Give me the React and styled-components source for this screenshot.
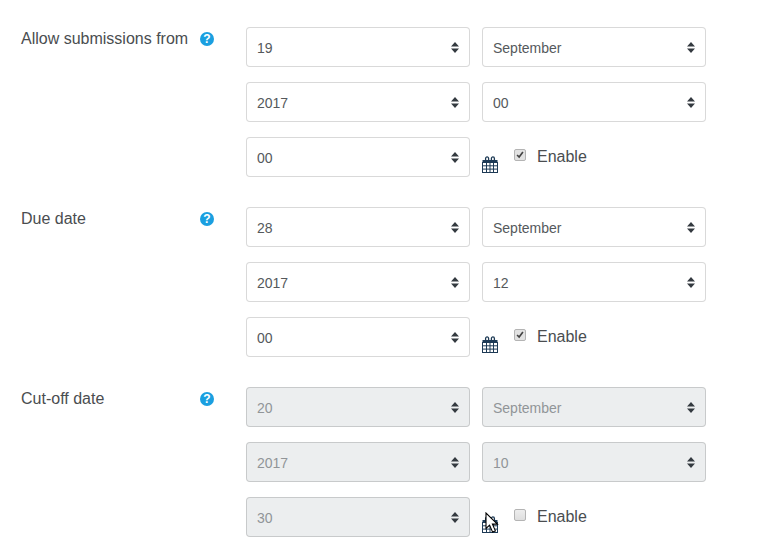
import React from "react";
import styled, { createGlobalStyle } from "styled-components";

const Global = createGlobalStyle`
  html, body { margin: 0; padding: 0; background: #fff; overflow: hidden; }
  body { font-family: "Liberation Sans", Arial, sans-serif; color: #4a4d50; }
`;

const Page = styled.div`
  width: 780px;
  height: 556px;
  padding: 27px 0 0 21px;
  box-sizing: border-box;
  overflow: hidden;
  position: relative;
`;

const Section = styled.section`
  display: grid;
  grid-template-columns: 179px 46px 460px;
  margin-bottom: 30px;
`;

const Label = styled.div`
  font-size: 16px;
  line-height: 23px;
  color: #4a4d50;
`;

const HelpWrap = styled.div`
  padding-top: 5px;
`;

const Fields = styled.div`
  display: grid;
  grid-template-columns: 224px 224px;
  column-gap: 12px;
  row-gap: 15px;
`;

const SelectWrap = styled.div`
  position: relative;
  height: 40px;
`;

const Select = styled.select`
  appearance: none;
  width: 100%;
  height: 40px;
  box-sizing: border-box;
  padding: 2px 24px 0 10px;
  border: 1px solid rgba(0, 0, 0, 0.15);
  border-radius: 4px;
  font-family: "Liberation Sans", Arial, sans-serif;
  font-size: 14px;
  color: ${(p) => (p.disabled ? "#919598" : "#55595c")};
  background: ${(p) => (p.disabled ? "#eceeef" : "#fff")};
  opacity: 1;
`;

const ArrowIcon = styled.svg`
  position: absolute;
  right: 11px;
  top: 15px;
  pointer-events: none;
`;

const EnableCell = styled.div`
  display: flex;
  align-items: flex-start;
  height: 40px;
`;

const CalendarLink = styled.span`
  display: block;
  width: 16px;
  height: 17px;
  margin-top: 19px;
  line-height: 0;
`;

const CheckLabel = styled.label`
  display: flex;
  align-items: center;
  margin: 8px 0 0 16px;
  font-size: 16px;
  line-height: 24px;
  color: #4a4d50;
`;

const Check = styled.input`
  appearance: none;
  width: 12px;
  height: 12px;
  margin: 0 11px 0 0;
  border: 1px solid #b4b4b4;
  border-radius: 2px;
  background: linear-gradient(#ededed, #dedede);
  position: relative;
  top: -2px;
  &:checked {
    background-image: url("data:image/svg+xml,%3Csvg xmlns='http://www.w3.org/2000/svg' viewBox='0 0 12 12'%3E%3Cpath d='M2.5 6l2.5 2.5L9.5 2.5' fill='none' stroke='%23444' stroke-width='2'/%3E%3C/svg%3E");
    background-size: 100% 100%;
    background-color: #e2e2e2;
  }
`;

const Cursor = styled.svg`
  position: absolute;
  left: 485px;
  top: 512px;
  pointer-events: none;
`;

const Help = () => (
  <svg width="14" height="14" viewBox="0 0 14 14" aria-label="Help">
    <circle cx="7" cy="7" r="7" fill="#1a9fe0" />
    <text x="7" y="11.2" textAnchor="middle" fontFamily="Liberation Sans" fontWeight="700" fontSize="12" fill="#fff">?</text>
  </svg>
);

const Arrows = () => (
  <ArrowIcon width="8" height="11" viewBox="0 0 8 11">
    <path d="M4 0L8 4.5H0zM4 11L0 6.5H8z" fill="#343a40" />
  </ArrowIcon>
);

const Calendar = () => (
  <svg width="16" height="17" viewBox="0 0 16 17">
    <path d="M3.6 5V2.4a1.5 1.5 0 0 1 3 0V5M9.4 5V2.4a1.5 1.5 0 0 1 3 0V5" fill="none" stroke="#1d3a55" strokeWidth="1.3" />
    <rect x="0.5" y="4" width="15" height="3" fill="#1d3a55" />
    <rect x="0.5" y="6.5" width="15" height="10" fill="#fff" stroke="#1d3a55" />
    <path d="M4.5 7v9M8 7v9M11.5 7v9M1 9.8h14M1 13.1h14" stroke="#1d3a55" strokeWidth="1" fill="none" />
  </svg>
);

const Field = ({ value, disabled }) => (
  <SelectWrap>
    <Select disabled={disabled} defaultValue={value}>
      <option>{value}</option>
    </Select>
    <Arrows />
  </SelectWrap>
);

const DateRow = ({ label, values, enabled }) => (
  <Section>
    <Label>{label}</Label>
    <HelpWrap>
      <Help />
    </HelpWrap>
    <Fields>
      <Field value={values[0]} disabled={!enabled} />
      <Field value={values[1]} disabled={!enabled} />
      <Field value={values[2]} disabled={!enabled} />
      <Field value={values[3]} disabled={!enabled} />
      <Field value={values[4]} disabled={!enabled} />
      <EnableCell>
        <CalendarLink>
          <Calendar />
        </CalendarLink>
        <CheckLabel>
          <Check type="checkbox" defaultChecked={enabled} />
          Enable
        </CheckLabel>
      </EnableCell>
    </Fields>
  </Section>
);

export default function App() {
  return (
    <Page>
      <Global />
      <DateRow label="Allow submissions from" values={["19", "September", "2017", "00", "00"]} enabled />
      <DateRow label="Due date" values={["28", "September", "2017", "12", "00"]} enabled />
      <DateRow label="Cut-off date" values={["20", "September", "2017", "10", "30"]} />
      <Cursor width="14" height="22" viewBox="0 0 14 22">
        <path d="M1 1v15.5l3.6-3.4 3 7 2.8-1.2-3-6.8h5z" fill="#fff" stroke="#000" strokeWidth="1.1" />
      </Cursor>
    </Page>
  );
}
